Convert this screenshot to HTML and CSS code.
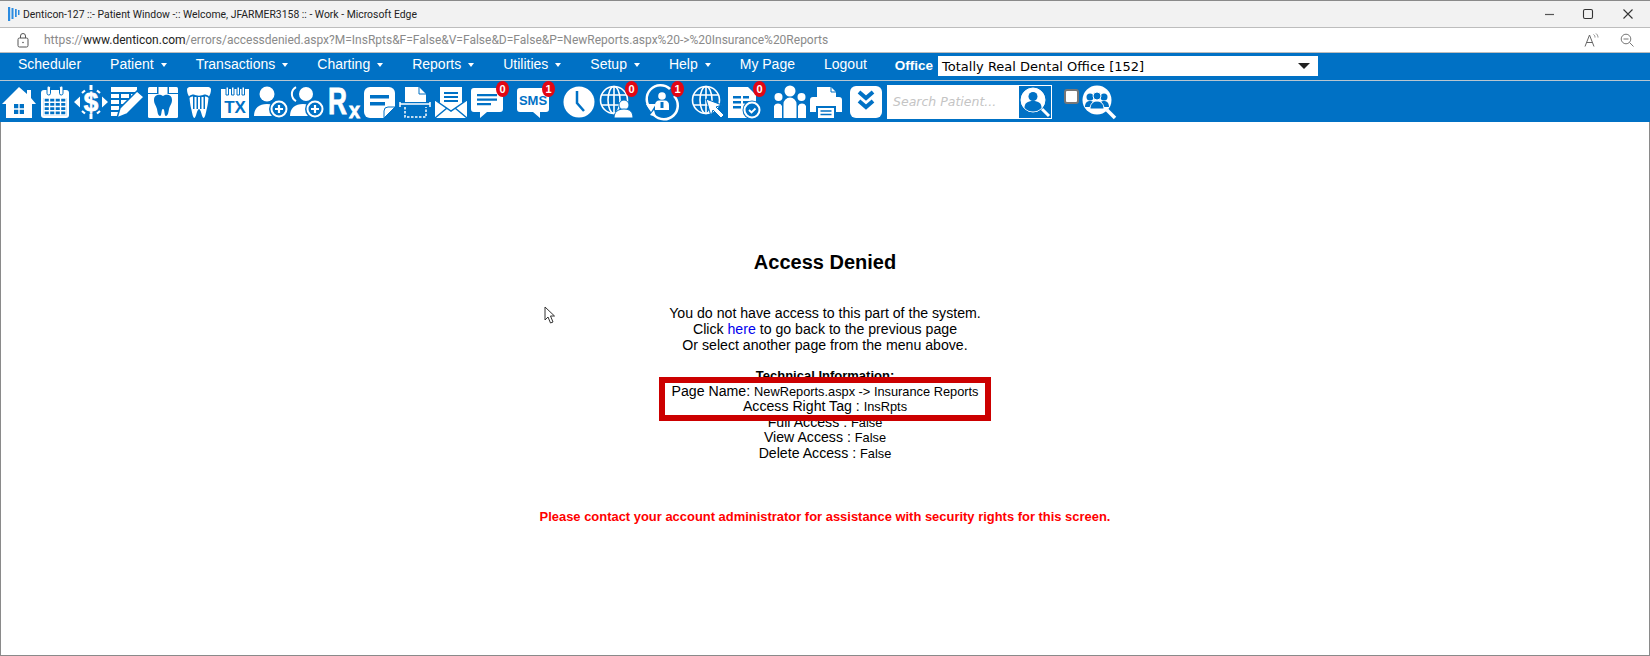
FILE: index.html
```html
<!DOCTYPE html>
<html lang="en">
<head>
    <meta charset="UTF-8">
    <title>Access Denied</title>
    <link rel="stylesheet" href="styles.css">
</head>
<body>
    <div class="title-bar">
        <svg class="app-logo" width="12" height="14" viewBox="0 0 12 14"><path d="M0 0h2.200v14H0zM3.500 1h2v11h-2zM7 2h1.700v8H7zM10 3h1.500v5H10z" fill="#2b8be0"/></svg>
        <span class="title-text">Denticon-127 ::- Patient Window -:: Welcome, JFARMER3158 :: - Work - Microsoft Edge</span>
        <div class="window-controls">
            <svg width="12" height="12" viewBox="0 0 12 12"><path d="M3 6.500h9" stroke="#555" stroke-width="1.200"/></svg>
            <svg width="12" height="12" viewBox="0 0 12 12"><rect x="1.500" y="1.500" width="9" height="9" rx="1.500" fill="none" stroke="#333" stroke-width="1.100"/></svg>
            <svg width="12" height="12" viewBox="0 0 12 12"><path d="M1.500 1.500l9 9M10.500 1.500l-9 9" stroke="#333" stroke-width="1.100"/></svg>
        </div>
    </div>

    <div class="url-bar">
        <svg class="lock" width="12" height="15" viewBox="0 0 12 15"><rect x="1" y="5" width="10" height="9" rx="1.500" fill="none" stroke="#555"/><path d="M3.500 5V3a2.500 2.500 0 0 1 5 0v2" fill="none" stroke="#555"/><circle cx="6" cy="9.500" r=".8" fill="#555"/></svg>
        <span class="url-text">https://<b>www.denticon.com</b>/errors/accessdenied.aspx?M=InsRpts&amp;F=False&amp;V=False&amp;D=False&amp;P=NewReports.aspx%20-&gt;%20Insurance%20Reports</span>
        <div class="url-tools">
            <svg width="15" height="14" viewBox="0 0 15 14"><path d="M1 13.500L5.500 2 10 13.500M2.800 9.500h5.400" fill="none" stroke="#666"/><path d="M9.500 1.500c1 .6 1.500 1.600 1.500 3M12 .5c1.200 1 2 2.400 2 4" fill="none" stroke="#888"/></svg>
            <svg width="14" height="14" viewBox="0 0 14 14"><circle cx="6" cy="6" r="4.800" fill="none" stroke="#777"/><path d="M3.500 6h5M9.500 9.500l4 4" stroke="#777"/></svg>
        </div>
    </div>

    <nav class="menu-bar">
        <a href="#">Scheduler</a>
        <a href="#" class="has-arrow">Patient</a>
        <a href="#" class="has-arrow">Transactions</a>
        <a href="#" class="has-arrow">Charting</a>
        <a href="#" class="has-arrow">Reports</a>
        <a href="#" class="has-arrow">Utilities</a>
        <a href="#" class="has-arrow">Setup</a>
        <a href="#" class="has-arrow">Help</a>
        <a href="#">My Page</a>
        <a href="#">Logout</a>
        <span class="office-label">Office</span>
        <div class="office-select">
            <span>Totally Real Dental Office [152]</span>
            <i class="select-arrow"></i>
        </div>
    </nav>

    <div class="tool-bar">
        <!-- home -->
        <div class="tool"><svg viewBox="0 0 36 36"><path d="M18 3l8 7V6h4v8l5 6h-4v14H5V20H1z" fill="#fff"/><path d="M13 20h10v10H13z" fill="#0071c5"/><path d="M17.300 20v10h1.400V20zM13 24.300v1.400h10v-1.400z" fill="#fff"/></svg></div>
        <!-- calendar -->
        <div class="tool"><svg viewBox="0 0 36 36"><rect x="4" y="6" width="28" height="28" rx="3" fill="#fff"/><rect x="6.500" y="14" width="23" height="17.500" fill="#0071c5"/><path d="M7 14h22v17H7zM12.500 14v17M18 14v17M23.500 14v17M7 18.200h22M7 22.500h22M7 26.800h22" fill="none" stroke="#fff" stroke-width="1.400"/><rect x="10" y="2" width="3.500" height="9" rx="1.700" fill="#fff" stroke="#0071c5"/><rect x="22.500" y="2" width="3.500" height="9" rx="1.700" fill="#fff" stroke="#0071c5"/></svg></div>
        <!-- dollar -->
        <div class="tool"><svg viewBox="0 0 36 36"><text x="18" y="27" class="glyph-dollar">$</text><path d="M1 18l6-5.500v11zM35 18l-6-5.500v11z" fill="#fff"/><path d="M16.500 1h3v5h-3zM16.500 30h3v5h-3z" fill="#fff"/><path d="M12 6.500L9 9M24 6.500L27 9M12 29.500L9 27M24 29.500l3-2.500" stroke="#fff" stroke-width="2.200"/></svg></div>
        <!-- list and pencil -->
        <div class="tool"><svg viewBox="0 0 36 36"><path d="M2 3h26v5H2zM2 10h8v4H2zM12 10h8v4h-8zM22 10h4v4h-4zM2 16h8v4H2zM12 16h8v4h-8zM2 22h8v4H2zM2 28h7v4H2z" fill="#fff"/><path d="M28 7l7 6-17 17-10 4 3-10z" fill="#fff" stroke="#0071c5" stroke-width="1.500"/></svg></div>
        <!-- tooth in a box -->
        <div class="tool"><svg viewBox="0 0 36 36"><rect x="3" y="3" width="30" height="31" rx="1.500" fill="#fff"/><path d="M3 9h9V3h1.500v7H3zM33 9h-9V3h-1.500v7H33z" fill="#0071c5"/><path d="M18 12c-3-2-9-2-9 4 0 4 2 5 3 9 .5 3 1 7 3 7s1-7 3-7 1 7 3 7 2.500-4 3-7c1-4 3-5 3-9 0-6-6-6-9-4z" fill="#0071c5"/></svg></div>
        <!-- crown -->
        <div class="tool"><svg viewBox="0 0 36 36"><path d="M6 5.500C6 3.500 8 3 10 3h16c2 0 4 .5 4 2.500 0 3-1 5-2 7-1-1.500-3-2-5-2-2 1.500-8 1.500-10 0-2 0-4 .5-5 2-1-2-2-4-2-7z" fill="#fff"/><path d="M8.500 14c1-1 2-1.500 3.500-1.500V25h1.500V13h2v12h1.500V13h2v12h1.500V13h2V25H24V12.500c1.500 0 2.500.5 3.500 1.500-.5 5-1 8-2 12-.6 3-1.500 8-3 8s-2.500-9-4.500-9-3 9-4.500 9-2.400-5-3-8c-1-4-1.500-7-2-12z" fill="#fff"/></svg></div>
        <!-- tx -->
        <div class="tool"><svg viewBox="0 0 36 36"><rect x="4" y="5" width="28" height="29" fill="#fff"/><path d="M9 3h2.500v8H9zM14.500 3H17v8h-2.500zM20 3h2.500v8H20zM25 3h2.500v8H25z" fill="#fff" stroke="#0071c5"/><text x="18" y="29" class="glyph-tx">TX</text></svg></div>
        <!-- add person -->
        <div class="tool"><svg viewBox="0 0 36 36"><circle cx="14" cy="10" r="7.500" fill="#fff"/><path d="M1 32c0-8 5-12 13-12s13 4 13 12z" fill="#fff"/><circle cx="26" cy="25" r="10" fill="#0071c5"/><circle cx="26" cy="25" r="7.500" fill="#0071c5" stroke="#fff" stroke-width="2"/><path d="M26 21v8M22 25h8" stroke="#fff" stroke-width="2.200"/></svg></div>
        <!-- add other person -->
        <div class="tool"><svg viewBox="0 0 36 36"><circle cx="17" cy="10" r="7" fill="#fff"/><path d="M7 3a8 8 0 0 0 0 14" fill="none" stroke="#fff" stroke-width="2"/><path d="M1 32c0-8 5-12 13-12s13 4 13 12z" fill="#fff"/><circle cx="26" cy="25" r="10" fill="#0071c5"/><circle cx="26" cy="25" r="7.500" fill="#0071c5" stroke="#fff" stroke-width="2"/><path d="M26 21v8M22 25h8" stroke="#fff" stroke-width="2.200"/></svg></div>
        <!-- rx -->
        <div class="tool tool-rx"><svg viewBox="0 0 36 36"><text x="3" y="30" class="glyph-r" textLength="19" lengthAdjust="spacingAndGlyphs">R</text><text x="24" y="34" class="glyph-x" textLength="11" lengthAdjust="spacingAndGlyphs">x</text></svg></div>
        <!-- note -->
        <div class="tool"><svg viewBox="0 0 36 36"><path d="M9 3h19a6 6 0 0 1 6 6v14L23 34H9a6 6 0 0 1-6-6V9a6 6 0 0 1 6-6z" fill="#fff"/><path d="M9 11h19v3.500H9zM9 18h15v3.500H9z" fill="#0071c5"/><path d="M34 23L23 34v-7a4 4 0 0 1 4-4z" fill="#fff" stroke="#0071c5"/></svg></div>
        <!-- scan -->
        <div class="tool"><svg viewBox="0 0 36 36"><path d="M8 3h14l7 7v8H8z" fill="#fff"/><path d="M22 3v7h7" fill="none" stroke="#0071c5"/><path d="M3 20h30" stroke="#fff" stroke-width="1.500"/><path d="M3 18v5M33 18v5" stroke="#fff" stroke-width="1.500"/><path d="M8 23v10h21V23" fill="none" stroke="#fff" stroke-width="1.500" stroke-dasharray="2.500 1.500"/></svg></div>
        <!-- mail -->
        <div class="tool"><svg viewBox="0 0 36 36"><path d="M2 16l16 10 16-10v18H2z" fill="#fff"/><path d="M7 3h22v20l-11 6-11-6z" fill="#fff"/><path d="M11 8h14v2H11zM11 12h14v2H11zM11 16h14v2H11z" fill="#0071c5"/><path d="M2 34l12-10M34 34L22 24M2 16l16 11 16-11" fill="none" stroke="#0071c5" stroke-width="1.500"/></svg></div>
        <!-- messages -->
        <div class="tool"><svg viewBox="0 0 36 36"><path d="M5 4h26a3 3 0 0 1 3 3v18a3 3 0 0 1-3 3H18l-7 6v-6H5a3 3 0 0 1-3-3V7a3 3 0 0 1 3-3z" fill="#fff"/><path d="M8 10h20v2.200H8zM8 14.500h20v2.200H8zM8 19h14v2.200H8z" fill="#0071c5"/></svg><span class="badge">0</span></div>
        <!-- sms -->
        <div class="tool tool-wide"><svg viewBox="0 0 36 36"><path d="M5 4h26a3 3 0 0 1 3 3v18a3 3 0 0 1-3 3h-6v6l-7-6H5a3 3 0 0 1-3-3V7a3 3 0 0 1 3-3z" fill="#fff"/><text x="18" y="21" class="glyph-sms">SMS</text></svg><span class="badge">1</span></div>
        <!-- clock -->
        <div class="tool tool-wide"><svg viewBox="0 0 36 36"><circle cx="18" cy="18" r="15.500" fill="#fff"/><path d="M16 7v12l7 8" fill="none" stroke="#0071c5" stroke-width="2.500"/></svg></div>
        <!-- globe and person -->
        <div class="tool tool-gap1"><svg viewBox="0 0 36 36"><g fill="none" stroke="#fff" stroke-width="1.600"><circle cx="16" cy="16" r="13.500"/><ellipse cx="16" cy="16" rx="6" ry="13.500"/><path d="M16 2.500v27M3 11h26M3 21h26"/></g><circle cx="26" cy="21" r="5" fill="#fff" stroke="#0071c5"/><path d="M16 34c0-6 4-9 10-9s9 3 9 9z" fill="#fff" stroke="#0071c5"/></svg><span class="badge">0</span></div>
        <!-- refresh and person -->
        <div class="tool tool-wide"><svg viewBox="0 0 36 36"><path d="M7 25A13.500 13.500 0 0 1 26 5M30 12a13.500 13.500 0 0 1-20 19" fill="none" stroke="#fff" stroke-width="2.500"/><path d="M2 20h10l-5 8zM10 26l2 7-6-2z" fill="#fff"/><circle cx="18" cy="12" r="3.800" fill="#fff"/><path d="M11 26v-5c0-3 2-4.500 4-4.500h6c2 0 4 1.500 4 4.500v5z" fill="#fff"/><path d="M16.500 18h3v6h-3z" fill="#0071c5"/></svg><span class="badge">1</span></div>
        <!-- globe and cursor -->
        <div class="tool tool-wide"><svg viewBox="0 0 36 36"><g fill="none" stroke="#fff" stroke-width="1.600"><circle cx="16" cy="16" r="13.500"/><ellipse cx="16" cy="16" rx="6" ry="13.500"/><path d="M16 2.500v27M3 11h26M3 21h26"/></g><path d="M16 15l16 6-6 2 8 8-3 3-8-8-2 6z" fill="#fff" stroke="#0071c5"/></svg></div>
        <!-- document check -->
        <div class="tool"><svg viewBox="0 0 36 36"><path d="M2 3h20l8 8v23H2z" fill="#fff"/><path d="M7 12h8v2.500H7zM17 12h6v2.500h-6zM7 17h8v2.500H7zM17 17h6v2.500h-6zM7 22h8v2.500H7z" fill="#0071c5"/><circle cx="26" cy="26" r="9.500" fill="#0071c5"/><circle cx="26" cy="26" r="7.500" fill="#0071c5" stroke="#fff" stroke-width="2"/><path d="M23 26l2.500 2.500 4-4" fill="none" stroke="#fff" stroke-width="1.800"/></svg><span class="badge">0</span></div>
        <!-- people -->
        <div class="tool tool-wide"><svg viewBox="0 0 36 36"><circle cx="18" cy="7" r="5.500" fill="#fff"/><circle cx="6.500" cy="13" r="4" fill="#fff"/><circle cx="29.500" cy="13" r="4" fill="#fff"/><path d="M11.500 34V20a6.500 6.500 0 0 1 13 0v14zM2 34V22a4.500 4.500 0 0 1 8 0v12zM26 34V22a4.500 4.500 0 0 1 8 0v12z" fill="#fff"/></svg></div>
        <!-- printer -->
        <div class="tool"><svg viewBox="0 0 36 36"><path d="M9 3h14l5 5v6H9z" fill="#fff"/><path d="M23 3v5h5" fill="none" stroke="#0071c5"/><path d="M5 13h26a3 3 0 0 1 3 3v12H28v-6H8v6H2V16a3 3 0 0 1 3-3z" fill="#fff"/><path d="M10 24h16v10H10z" fill="#fff"/><path d="M12.500 27h11M12.500 30.500h11" stroke="#0071c5" stroke-width="1.500"/></svg></div>
        <!-- collapse -->
        <div class="tool tool-gap2"><svg viewBox="0 0 36 36"><rect x="2" y="2" width="32" height="32" rx="6" fill="#fff"/><path d="M11 8l7 6 7-6M11 17l7 6 7-6" fill="none" stroke="#0071c5" stroke-width="4"/></svg></div>

        <div class="search-box">
            <span class="search-hint">Search Patient...</span>
            <div class="search-button"><svg width="32" height="32" viewBox="0 0 32 32"><circle cx="14" cy="14" r="12" fill="#fff" stroke="#fff"/><circle cx="14" cy="10.500" r="4.500" fill="#0071c5"/><path d="M5.500 22c0-5 3-7 8.500-7s8.500 2 8.500 7a12 12 0 0 1-17 0z" fill="#0071c5"/><path d="M23 23l7 7" stroke="#fff" stroke-width="3"/></svg></div>
        </div>
        <i class="check-box"></i>
        <div class="tool tool-group"><svg viewBox="0 0 36 36"><circle cx="16" cy="16" r="14.500" fill="#fff"/><circle cx="9" cy="13" r="3.500" fill="#0071c5"/><circle cx="23" cy="13" r="3.500" fill="#0071c5"/><circle cx="16" cy="12" r="4" fill="#0071c5" stroke="#fff"/><path d="M4 23c0-4 2-6 5-6s5 2 5 6zM18 23c0-4 2-6 5-6s5 2 5 6z" fill="#0071c5"/><path d="M9 25c0-5 3-8 7-8s7 3 7 8z" fill="#0071c5" stroke="#fff"/><path d="M26 26l8 8" stroke="#fff" stroke-width="3.500"/></svg></div>
    </div>

    <main class="page">
        <h3>Access Denied</h3>
        <p>
            You do not have access to this part of the system.<br>
            Click <a href="#">here</a> to go back to the previous page<br>
            Or select another page from the menu above.
        </p>
        <div class="tech-info">
            <b>Technical Information:</b><br>
            Page Name: <small>NewReports.aspx -&gt; Insurance Reports</small><br>
            Access Right Tag : <small>InsRpts</small><br>
            Full Access : <small>False</small><br>
            View Access : <small>False</small><br>
            Delete Access : <small>False</small>
            <div class="highlight-box"></div>
        </div>
        <p class="contact-note">Please contact your account administrator for assistance with security rights for this screen.</p>

        <svg class="mouse-pointer" width="12" height="18" viewBox="0 0 12 18"><path d="M1 1v13l3-3 2.500 6 2.500-1-2.500-6h4z" fill="#fff" stroke="#333"/></svg>
    </main>
</body>
</html>
```

FILE: styles.css
```css
* {
    margin: 0;
    padding: 0;
    box-sizing: border-box;
}

body {
    width: 1650px;
    height: 656px;
    overflow: hidden;
    background-color: white;
    font-family: "Liberation Sans", Arial, sans-serif;
    font-size: 14.150px;
    color: #000;
}

/* browser window chrome */
.title-bar {
    display: flex;
    align-items: center;
    height: 28px;
    padding-left: 8px;
    background-color: #f2f2f2;
    border-top: 1px solid #8a8a8a;
    border-bottom: 1px solid #bdbdbd;
    font-family: Roboto, sans-serif;
    font-size: 10.400px;
    color: #222;
}

.app-logo {
    margin-right: 3px;
}

.window-controls {
    display: flex;
    gap: 28px;
    margin-left: auto;
    margin-right: 16px;
}

.url-bar {
    display: flex;
    align-items: center;
    height: 25px;
    padding-left: 17px;
    background-color: white;
    border-bottom: 1px solid #bdbdbd;
    font-family: Roboto, sans-serif;
    font-size: 12px;
    color: #8a8a8a;
}

.url-bar b {
    font-weight: 400;
    color: #222;
}

.lock {
    margin-right: 15px;
}

.url-tools {
    display: flex;
    gap: 21px;
    margin-left: auto;
    margin-right: 16px;
}

/* menu row */
.menu-bar {
    display: flex;
    align-items: center;
    gap: 29px;
    height: 28px;
    padding: 0 0 1px 18px;
    background-color: #0071c5;
    border-bottom: 1px solid #b9c6d0;
    font-size: 14px;
}

.menu-bar a {
    margin-bottom: 4px;
    color: white;
    text-decoration: none;
}

.has-arrow::after {
    content: "";
    display: inline-block;
    margin-left: 7px;
    vertical-align: 2px;
    border-left: 3px solid transparent;
    border-right: 3px solid transparent;
    border-top: 4px solid white;
}

.office-label {
    margin-left: -1px;
    margin-bottom: 2px;
    font-size: 13.500px;
    font-weight: bold;
    color: white;
}

.office-select {
    display: flex;
    align-items: center;
    justify-content: space-between;
    width: 380px;
    height: 20px;
    margin-left: -24px;
    padding: 0 8px 0 4px;
    background-color: white;
    font-family: "DejaVu Sans", sans-serif;
    font-size: 13px;
}

.select-arrow {
    border-left: 6px solid transparent;
    border-right: 6px solid transparent;
    border-top: 6px solid #222;
}

/* icon row */
.tool-bar {
    display: flex;
    align-items: center;
    height: 41px;
    padding-left: 1px;
    background-color: #0071c5;
}

.tool {
    position: relative;
    width: 36px;
    height: 36px;
    flex: none;
}

.tool svg {
    display: block;
    width: 36px;
    height: 36px;
    overflow: visible;
}

.tool-wide {
    margin-left: 10px;
}

.tool-gap1 {
    margin-left: 1px;
}

.tool-gap2 {
    margin-left: 4px;
}

.tool-group {
    margin-left: 2px;
}

.badge {
    position: absolute;
    top: -3px;
    right: -4px;
    width: 13px;
    height: 16px;
    border-radius: 50%;
    background-color: #e30613;
    color: white;
    font-size: 11px;
    font-weight: bold;
    line-height: 16px;
    text-align: center;
}

.glyph-dollar {
    font: bold 26px "Liberation Sans", sans-serif;
    fill: white;
    stroke: white;
    stroke-width: 0.8;
    text-anchor: middle;
}

.glyph-tx {
    font: bold 17px "Liberation Sans", sans-serif;
    fill: #0071c5;
    text-anchor: middle;
}

.glyph-r {
    font: bold 36px "Liberation Sans", sans-serif;
    fill: white;
    stroke: white;
    stroke-width: 0.8;
}

.glyph-x {
    font: bold 22px "Liberation Sans", sans-serif;
    fill: white;
    stroke: white;
    stroke-width: 0.8;
}

.glyph-sms {
    font: bold 13px "Liberation Sans", sans-serif;
    fill: #0071c5;
    text-anchor: middle;
}

.search-box {
    display: flex;
    align-items: center;
    justify-content: space-between;
    width: 165px;
    height: 34px;
    margin-left: 3px;
    padding-left: 5px;
    background-color: white;
    border: 1px solid white;
}

.search-hint {
    font-style: italic;
    font-family: "DejaVu Sans", sans-serif;
    font-size: 12.500px;
    color: #c4c4c4;
}

.search-button {
    width: 32px;
    height: 32px;
    background-color: #0071c5;
}

.search-button svg {
    display: block;
}

.check-box {
    flex: none;
    width: 15px;
    height: 15px;
    margin: -10px 0 0 12px;
    background-color: white;
    border: 2px solid #777;
    border-radius: 3px;
}

/* page content */
.page {
    position: relative;
    display: flex;
    flex-direction: column;
    align-items: center;
    height: 534px;
    padding-top: 129px;
    border-left: 1px solid #8a8a8a;
    border-right: 1px solid #8a8a8a;
    border-bottom: 1px solid #8a8a8a;
    text-align: center;
}

.page h3 {
    margin-bottom: 32px;
    font-size: 20px;
    line-height: 22px;
}

.page a {
    color: #0000ee;
    text-decoration: none;
}

.tech-info {
    position: relative;
    margin-top: 15px;
    line-height: 15.600px;
}

.tech-info b {
    font-size: 13px;
}

.tech-info small {
    font-size: 12.800px;
}

.highlight-box {
    position: absolute;
    top: 9px;
    left: -13px;
    right: -13px;
    height: 44px;
    border: 6px solid #cc0000;
}

.contact-note {
    margin-top: 47px;
    color: red;
    font-weight: bold;
    font-size: 12.950px;
}

.mouse-pointer {
    position: absolute;
    top: 184px;
    left: 543px;
}
```
